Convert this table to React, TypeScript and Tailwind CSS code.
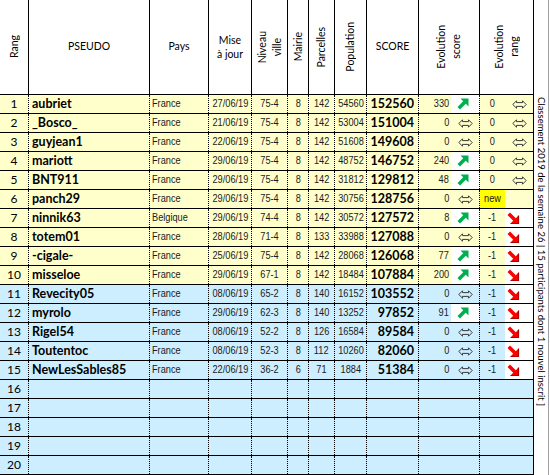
import React from "react";

type Row = {
  r: number;
  name?: string;
  pays?: string;
  date?: string;
  niv?: string;
  mairie?: string;
  parc?: string;
  pop?: string;
  score?: string;
  es?: string;
  esA?: "up" | "eq";
  er?: string;
  erA?: "down" | "eq" | "new";
};

const data: Row[] = [
  { r: 1, name: "aubriet", pays: "France", date: "27/06/19", niv: "75-4", mairie: "8", parc: "142", pop: "54560", score: "152560", es: "330", esA: "up", er: "0", erA: "eq" },
  { r: 2, name: "_Bosco_", pays: "France", date: "21/06/19", niv: "75-4", mairie: "8", parc: "142", pop: "53004", score: "151004", es: "0", esA: "eq", er: "0", erA: "eq" },
  { r: 3, name: "guyjean1", pays: "France", date: "22/06/19", niv: "75-4", mairie: "8", parc: "142", pop: "51608", score: "149608", es: "0", esA: "eq", er: "0", erA: "eq" },
  { r: 4, name: "mariott", pays: "France", date: "29/06/19", niv: "75-4", mairie: "8", parc: "142", pop: "48752", score: "146752", es: "240", esA: "up", er: "0", erA: "eq" },
  { r: 5, name: "BNT911", pays: "France", date: "29/06/19", niv: "75-4", mairie: "8", parc: "142", pop: "31812", score: "129812", es: "48", esA: "up", er: "0", erA: "eq" },
  { r: 6, name: "panch29", pays: "France", date: "29/06/19", niv: "75-4", mairie: "8", parc: "142", pop: "30756", score: "128756", es: "0", esA: "eq", er: "new", erA: "new" },
  { r: 7, name: "ninnik63", pays: "Belgique", date: "29/06/19", niv: "74-4", mairie: "8", parc: "142", pop: "30572", score: "127572", es: "8", esA: "up", er: "-1", erA: "down" },
  { r: 8, name: "totem01", pays: "France", date: "28/06/19", niv: "71-4", mairie: "8", parc: "133", pop: "33988", score: "127088", es: "0", esA: "eq", er: "-1", erA: "down" },
  { r: 9, name: "-cigale-", pays: "France", date: "25/06/19", niv: "75-4", mairie: "8", parc: "142", pop: "28068", score: "126068", es: "77", esA: "up", er: "-1", erA: "down" },
  { r: 10, name: "misseloe", pays: "France", date: "29/06/19", niv: "67-1", mairie: "8", parc: "142", pop: "18484", score: "107884", es: "200", esA: "up", er: "-1", erA: "down" },
  { r: 11, name: "Revecity05", pays: "France", date: "08/06/19", niv: "65-2", mairie: "8", parc: "140", pop: "16152", score: "103552", es: "0", esA: "eq", er: "-1", erA: "down" },
  { r: 12, name: "myrolo", pays: "France", date: "29/06/19", niv: "62-3", mairie: "8", parc: "140", pop: "13252", score: "97852", es: "91", esA: "up", er: "-1", erA: "down" },
  { r: 13, name: "Rigel54", pays: "France", date: "08/06/19", niv: "52-2", mairie: "8", parc: "126", pop: "16584", score: "89584", es: "0", esA: "eq", er: "-1", erA: "down" },
  { r: 14, name: "Toutentoc", pays: "France", date: "08/06/19", niv: "52-3", mairie: "8", parc: "112", pop: "10260", score: "82060", es: "0", esA: "eq", er: "-1", erA: "down" },
  { r: 15, name: "NewLesSables85", pays: "France", date: "22/06/19", niv: "36-2", mairie: "6", parc: "71", pop: "1884", score: "51384", es: "0", esA: "eq", er: "-1", erA: "down" },
  { r: 16 },
  { r: 17 },
  { r: 18 },
  { r: 19 },
  { r: 20 },
];

const Up = () => (
  <svg width="12" height="12" viewBox="0 0 12 12">
    <polygon points="3.5,0.5 11.5,0.5 11.5,8.5 8.8,5.8 3,11.5 0.5,9 6.2,3.2" fill="#00b050" />
  </svg>
);

const Down = () => (
  <svg width="13" height="12" viewBox="0 0 13 12">
    <polygon points="3.5,11.5 11.5,11.5 11.5,3.5 8.8,6.2 3,0.5 0.5,3 6.2,8.8" fill="#ff0000" />
    <polyline points="3.5,11.5 11.5,11.5 11.5,3.5" fill="none" stroke="#b00000" strokeWidth="1.2" />
  </svg>
);

const Eq = () => (
  <svg width="15" height="9" viewBox="0 0 15 9">
    <polygon
      points="0.8,4.5 4.5,0.8 4.5,2.6 10.5,2.6 10.5,0.8 14.2,4.5 10.5,8.2 10.5,6.4 4.5,6.4 4.5,8.2"
      fill="none"
      stroke="#3a3a3a"
      strokeWidth="1"
    />
  </svg>
);

const nbase = "inline-block whitespace-nowrap scale-x-[0.8] font-['Liberation_Sans',Arial,sans-serif] text-[11.5px] text-[#1a1a1a]";

const N = ({ children, align = "c" }: { children?: React.ReactNode; align?: "l" | "c" | "r" }) => {
  const o = align === "l" ? "origin-left" : align === "r" ? "origin-right" : "origin-center";
  return <span className={`${nbase} ${o}`}>{children}</span>;
};

const cal = "font-['Lato',sans-serif]";

const hcell = "h-full border-r border-black flex items-center justify-center shrink-0";
const vtext = "[writing-mode:vertical-rl] rotate-180 text-center leading-[15px]";
const dcell = "h-full border-r border-dotted border-black flex items-center shrink-0";

export default function App() {
  return (
    <div className="w-[550px] h-[475px] bg-white flex overflow-hidden text-black">
      <div className="w-[534px] flex flex-col shrink-0">
        {/* header */}
        <div className={`flex h-[95px] border-b border-black ${cal} text-[10.5px]`}>
          <div className={`${hcell} w-[29px]`}>
            <span className={vtext}>Rang</span>
          </div>
          <div className={`${hcell} w-[121px]`}>PSEUDO</div>
          <div className={`${hcell} w-[59px]`}>Pays</div>
          <div className={`${hcell} w-[43px] flex-col leading-[14px] text-center`}>
            <span>Mise</span>
            <span>à jour</span>
          </div>
          <div className={`${hcell} w-[36px]`}>
            <span className={vtext}>
              Niveau
              <br />
              ville
            </span>
          </div>
          <div className={`${hcell} w-[21px]`}>
            <span className={vtext}>Mairie</span>
          </div>
          <div className={`${hcell} w-[26px]`}>
            <span className={vtext}>Parcelles</span>
          </div>
          <div className={`${hcell} w-[32px]`}>
            <span className={vtext}>Population</span>
          </div>
          <div className={`${hcell} w-[52px]`}>SCORE</div>
          <div className={`${hcell} w-[61px]`}>
            <span className={vtext}>
              Evolution
              <br />
              score
            </span>
          </div>
          <div className={`${hcell} w-[54px]`}>
            <span className={vtext}>
              Evolution
              <br />
              rang
            </span>
          </div>
        </div>
        {/* rows */}
        {data.map((d) => {
          const bg = d.r <= 10 ? "bg-[#ffffcc]" : "bg-[#cceeff]";
          return (
            <div key={d.r} className={`flex h-[19px] border-b border-black ${bg}`}>
              <div className={`${dcell} w-[29px] justify-center ${cal} text-[12px]`}>{d.r}</div>
              <div className={`${dcell} w-[121px] pl-[3px] ${cal} font-bold text-[12.5px]`}>{d.name}</div>
              <div className={`${dcell} w-[59px] pl-[2px]`}>
                <N align="l">{d.pays}</N>
              </div>
              <div className={`${dcell} w-[43px] justify-center`}>
                <N>{d.date}</N>
              </div>
              <div className={`${dcell} w-[36px] justify-center`}>
                <N>{d.niv}</N>
              </div>
              <div className={`${dcell} w-[21px] justify-center`}>
                <N>{d.mairie}</N>
              </div>
              <div className={`${dcell} w-[26px] justify-center`}>
                <N>{d.parc}</N>
              </div>
              <div className={`${dcell} w-[32px] justify-center`}>
                <N>{d.pop}</N>
              </div>
              <div className={`${dcell} w-[52px] justify-end pr-[4px] ${cal} font-bold text-[12.5px]`}>{d.score}</div>
              <div className={`${dcell} w-[61px]`}>
                <div className="w-[32px] h-full flex items-center justify-end pr-[2px]">
                  <N align="r">{d.es}</N>
                </div>
                <div className={`w-[28px] h-full flex items-center ${d.esA === "up" ? "bg-white pl-[6px]" : "pl-[7px]"}`}>
                  {d.esA === "up" && <Up />}
                  {d.esA === "eq" && <Eq />}
                </div>
              </div>
              <div className="h-full border-r border-black flex items-center shrink-0 w-[54px]">
                <div className={`w-[25px] h-full flex items-center justify-center ${d.erA === "new" ? "bg-[#ffff00]" : ""}`}>
                  <N>{d.er}</N>
                </div>
                <div className={`w-[28px] h-full flex items-center ${d.erA === "down" ? "bg-white pl-[2px]" : "pl-[7px]"}`}>
                  {d.erA === "down" && <Down />}
                  {d.erA === "eq" && <Eq />}
                </div>
              </div>
            </div>
          );
        })}
      </div>
      <div className="w-[15px] h-full border-r border-[#a0a0a0] flex flex-col items-center pt-[97px] shrink-0">
        <span className={`[writing-mode:vertical-rl] ${cal} text-[9.5px] tracking-[0.02px] leading-[14px] whitespace-nowrap`}>
          Classement 2019 de la semaine 26 | 15 participants dont 1 nouvel inscrit ]
        </span>
      </div>
    </div>
  );
}
